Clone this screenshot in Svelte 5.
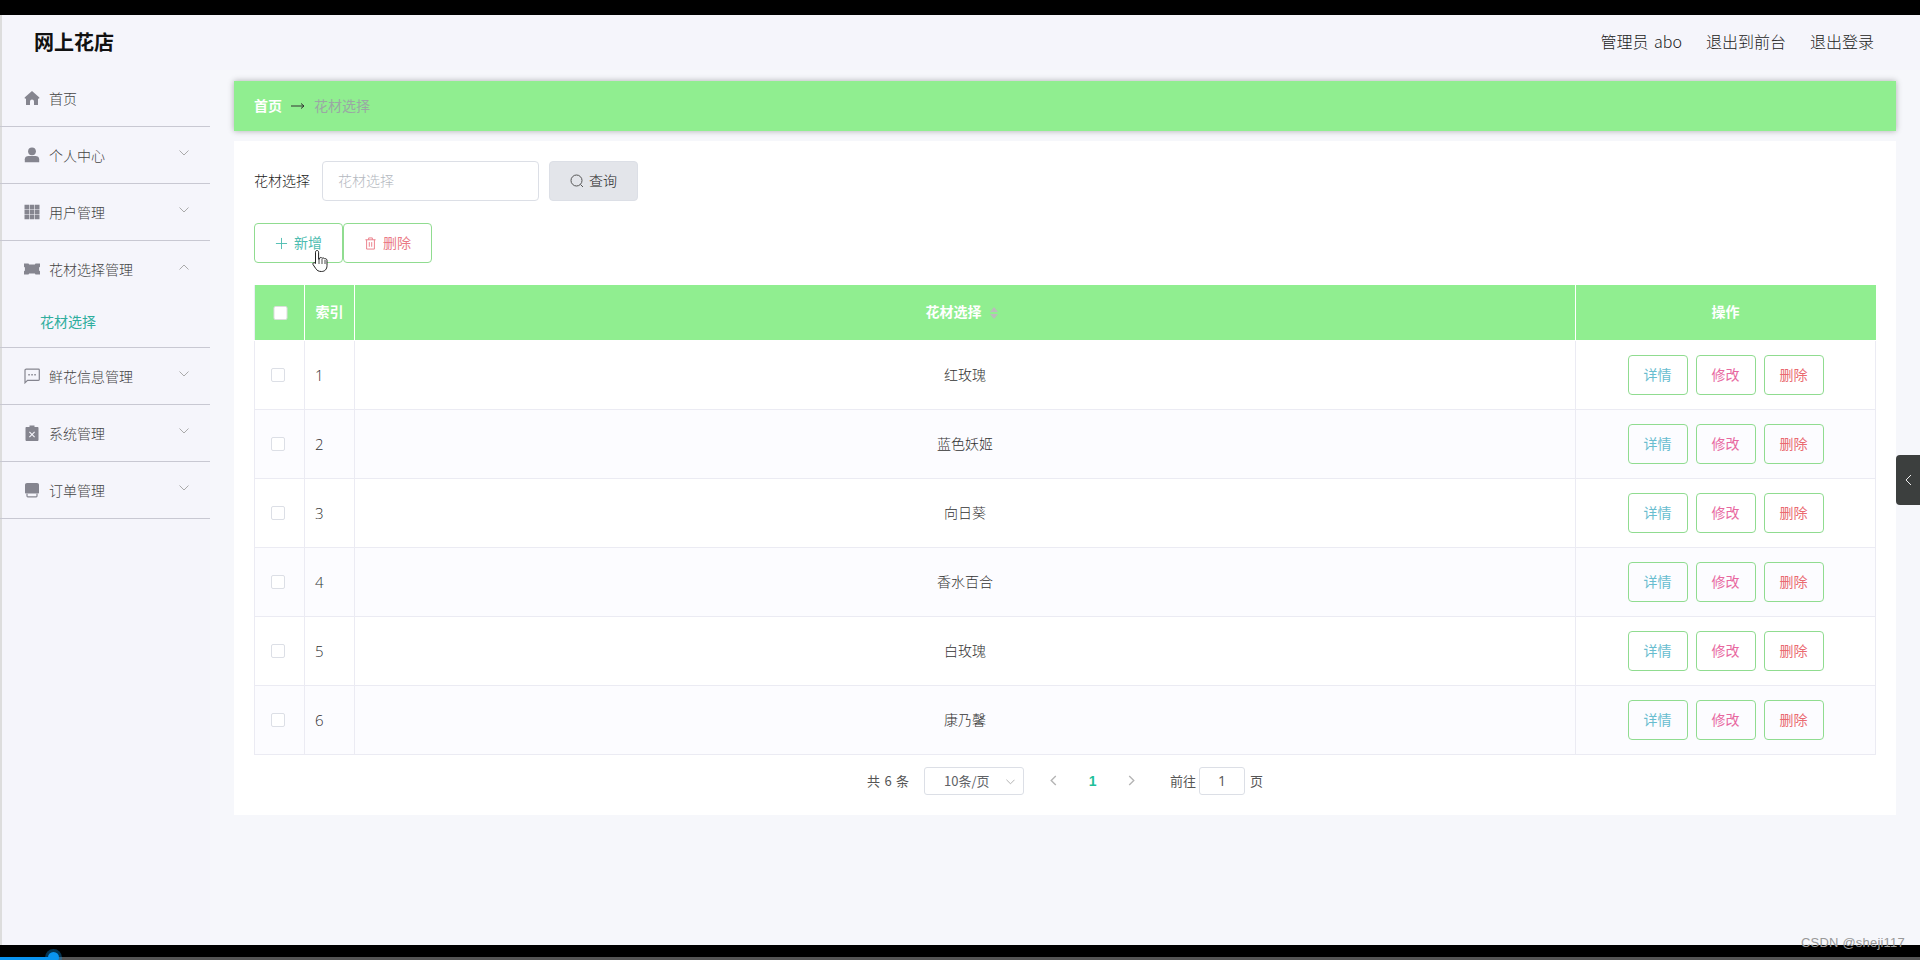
<script>
  const rows = ['红玫瑰', '蓝色妖姬', '向日葵', '香水百合', '白玫瑰', '康乃馨'];
  const menu = [
    { name: '首页', icon: 'home' },
    { name: '个人中心', icon: 'user', arrow: 'down' },
    { name: '用户管理', icon: 'grid', arrow: 'down' },
    { name: '花材选择管理', icon: 'ticket', arrow: 'up', sub: '花材选择' },
    { name: '鲜花信息管理', icon: 'chat', arrow: 'down' },
    { name: '系统管理', icon: 'clip', arrow: 'down' },
    { name: '订单管理', icon: 'print', arrow: 'down' }
  ];
</script>

<div class="page">
  <div class="bar top"></div>
  <header class="head">
    <div class="logo">网上花店</div>
    <nav class="links">
      <span class="who">管理员 abo</span><span>退出到前台</span><span>退出登录</span>
    </nav>
  </header>
  <div class="body">
    <aside class="side">
      {#each menu as m}
        <div class="group">
          <div class="item">
            <svg class="ic" viewBox="0 0 16 16">
              {#if m.icon === 'home'}
                <path d="M8 1 .6 7.600 1 9l1-.7V15h4v-3.500a2 2 0 0 1 4 0V15h4V8.300l1 .7.4-1.400z" />
              {:else if m.icon === 'user'}
                <circle cx="8" cy="4.300" r="3.900" /><path d="M.8 15.200v-3C.8 10 2.500 9 4.500 9h7c2 0 3.700 1 3.700 3.200v3z" />
              {:else if m.icon === 'grid'}
                <path d="M.5.800h4.600v4.400H.5zM5.700.800h4.600v4.400H5.700zM10.900.800h4.600v4.400h-4.600zM.5 5.800h4.600v4.400H.5zM5.700 5.800h4.600v4.400H5.700zM10.900 5.800h4.600v4.400h-4.600zM.5 10.800h4.600v4.400H.5zM5.700 10.800h4.600v4.400H5.700zM10.900 10.800h4.600v4.400h-4.600z" />
              {:else if m.icon === 'ticket'}
                <path d="M0 2.500h4.500l.6.9h5.800l.6-.9H16v3.300l-.9.7v3l.9.7v3.300h-4.500l-.6-.9H5.100l-.6.9H0v-3.300l.9-.7v-3L0 5.800z" />
              {:else if m.icon === 'chat'}
                <path class="line" d="M2.200 1.200h12.300c.5 0 .8.300.8.800v9.500c0 .5-.3.800-.8.800H3.500L1 14.800V2.200c0-.6.500-1 1.200-1z" /><path d="M4.300 6h1.500v1.500H4.300zM7.300 6h1.500v1.500H7.300zM10.300 6h1.500v1.500h-1.500z" />
              {:else if m.icon === 'clip'}
                <path d="M5.500.500h5V2h3c.5 0 1 .4 1 1v12c0 .5-.5 1-1 1h-11c-.5 0-1-.5-1-1V3c0-.6.500-1 1-1h3zM5.800 6.500 5 7.300 7.200 9.500 5 11.700l.8.800L8 10.300l2.200 2.200.8-.8L8.800 9.500 11 7.300l-.8-.8L8 8.700z" fill-rule="evenodd" />
              {:else}
                <path d="M3 1h10c1.200 0 2 .8 2 2v7.500c0 .6-.4 1-1 1H2c-.6 0-1-.4-1-1V3c0-1.200.8-2 2-2z" /><path class="line" d="M3 11.800V14c0 .5.300.800.800.800h8.400c.5 0 .8-.3.800-.8v-2.200" />
              {/if}
            </svg>
            <span class="label">{m.name}</span>
            {#if m.arrow}
              <svg class="chev" class:up={m.arrow === 'up'} viewBox="0 0 10 6"><path d="M.5.500 5 5 9.500.500" /></svg>
            {/if}
          </div>
          {#if m.sub}<div class="sub">{m.sub}</div>{/if}
        </div>
      {/each}
    </aside>
    <main class="main">
      <div class="crumb">
        <b>首页</b>
        <svg class="sep" viewBox="0 0 14 8"><path d="M0 4h13M10 1.500 13 4l-3 2.500" /></svg>
        <span>花材选择</span>
      </div>
      <section class="card">
        <div class="search">
          <span class="flabel">花材选择</span>
          <div class="input">花材选择</div>
          <div class="query">
            <svg class="mag" viewBox="0 0 14 14"><circle cx="6.500" cy="6.500" r="5.500" /><path d="m10.500 10.500 2.500 2.500" /></svg>
            查询
          </div>
        </div>
        <div class="actions">
          <div class="btn add">
            <svg class="bi" viewBox="0 0 14 14"><path d="M7 1v12M1 7h12" /></svg>新增
          </div>
          <div class="btn del">
            <svg class="bi" viewBox="0 0 14 14"><path d="M1.500 3h11M5 3V1h4v2M2.800 3v10h8.400V3M5.700 5.500v5M8.300 5.500v5" /></svg>删除
          </div>
        </div>
        <table class="tbl">
          <colgroup><col class="c1" /><col class="c2" /><col /><col class="c4" /></colgroup>
          <thead>
            <tr>
              <th><i class="chk head-chk"></i></th>
              <th>索引</th>
              <th>花材选择<svg class="sort" viewBox="0 0 8 12"><path d="M4 0 8 5H0zM4 12 0 7h8z" /></svg></th>
              <th>操作</th>
            </tr>
          </thead>
          <tbody>
            {#each rows as r, i}
              <tr class:odd={i % 2 === 1}>
                <td class="cc"><i class="chk"></i></td>
                <td class="idx">{i + 1}</td>
                <td class="name">{r}</td>
                <td>
                  <div class="ops">
                    <div class="op a">详情</div><div class="op b">修改</div><div class="op c">删除</div>
                  </div>
                </td>
              </tr>
            {/each}
          </tbody>
        </table>
        <div class="pager">
          <span class="total">共 6 条</span>
          <div class="size">10条/页<svg class="schev" viewBox="0 0 10 6"><path d="M.5.500 5 5 9.500.500" /></svg></div>
          <svg class="pg first" viewBox="0 0 7 12"><path d="M6 1 1 6l5 5" /></svg>
          <b class="num">1</b>
          <svg class="pg" viewBox="0 0 7 12"><path d="m1 1 5 5-5 5" /></svg>
          <span class="goto">前往</span>
          <div class="jump">1</div>
          <span>页</span>
        </div>
      </section>
    </main>
  </div>
  <div class="bar bottom"><div class="prog"></div><i class="knob"></i></div>

  <div class="tab"><svg viewBox="0 0 7 12"><path d="M6 1 1 6l5 5" /></svg></div>
  <svg class="cursor" viewBox="0 0 18 24">
    <path d="M5 1.500c1 0 1.600.7 1.600 1.700v7l1-.3V9c.8-.8 2-.6 2.500.3.800-.6 2-.4 2.400.5.800-.4 2.400 0 2.500 1.500v5.200c0 3.500-2 6-5.500 6-3 0-4.500-1-5.800-3L1 15.500c-.6-1.200.8-2.500 2-1.500l.5.500V3.200c0-1 .6-1.700 1.500-1.700z" />
    <path d="M7 10v5M10 10v5M13 11v4" />
  </svg>
  <div class="mark">CSDN @sheji117</div>
</div>

<style>
  :global(body) { margin: 0; }
  .page {
    position: relative;
    width: 1920px;
    height: 960px;
    overflow: hidden;
    display: flex;
    flex-direction: column;
    background: #f6f7fb;
    font-family: "Noto Sans CJK SC", "Liberation Sans", sans-serif;
    font-size: 14px;
    font-weight: 300;
    color: #444;
  }
  .bar { background: #000; flex: none; }
  .top { height: 15px; }
  .bottom { height: 15px; position: relative; }
  .prog { position: absolute; left: 0; right: 0; bottom: 0; height: 3px; background: linear-gradient(90deg, #0a94f0 53px, #555 53px); }
  .knob { position: absolute; left: 47.500px; top: 7px; width: 11px; height: 11px; border-radius: 50%; background: #0a94f0; box-shadow: 0 0 0 3px rgba(10, 148, 240, .35); }
  .head {
    height: 55px;
    flex: none;
    display: flex;
    align-items: center;
    justify-content: space-between;
    padding: 0 46px 3px 32px;
    background: #f5f5fb;
    border-left: 2px solid #ddd;
    box-sizing: border-box;
  }
  .logo { font-size: 20px; font-weight: 700; color: #111; }
  .links { display: flex; gap: 24px; font-size: 16px; color: #222; }
  .who { word-spacing: 2px; }
  .body { flex: 1; display: flex; min-height: 0; }
  .side {
    width: 210px;
    flex: none;
    background: #f5f5fb;
    border-left: 2px solid #ddd;
    box-sizing: border-box;
  }
  .group { border-bottom: 1px solid #c8c8d2; margin-left: -2px; }
  .item { height: 56px; display: flex; align-items: center; padding-left: 24px; color: #444; position: relative; }
  .ic { width: 16px; height: 16px; fill: #85858f; margin-right: 9px; flex: none; }
  .ic .line { fill: none; stroke: #85858f; stroke-width: 1.200; }
  .chev { position: absolute; left: 179px; top: 23px; width: 10px; height: 6px; }
  .chev path, .schev path { fill: none; stroke: #aaa; stroke-width: 1; }
  .chev.up { transform: rotate(180deg); }
  .sub { height: 50px; box-sizing: border-box; padding: 0 0 2px 40px; display: flex; align-items: center; color: #2fae9e; font-weight: 400; }
  .main { flex: 1; padding: 11px 24px 0; min-width: 0; }
  .crumb {
    height: 50px;
    box-sizing: border-box;
    display: flex;
    align-items: center;
    padding: 0 0 2px 20px;
    background: #90ee90;
    box-shadow: 0 0 6px rgba(0, 0, 0, .3);
    color: #9aa8a4;
    font-weight: 400;
  }
  .crumb b { color: #fff; font-weight: 700; }
  .sep { width: 14px; height: 8px; margin: 2px 9px 0 9px; }
  .sep path { fill: none; stroke: #333; stroke-width: 1; }
  .card { margin-top: 10px; background: #fff; padding: 20px 20px 0; height: 674px; box-sizing: border-box; }
  .search { display: flex; align-items: center; height: 40px; color: #222; }
  .flabel { width: 68px; padding-bottom: 2px; }
  .input {
    width: 217px;
    height: 40px;
    box-sizing: border-box;
    border: 1px solid #dcdfe6;
    border-radius: 4px;
    display: flex;
    align-items: center;
    padding: 0 0 2px 15px;
    color: #b4b8c0;
  }
  .query {
    margin-left: 10px;
    width: 89px;
    height: 40px;
    background: #e3e5ea;
    border: 1px solid #dcdfe6;
    border-radius: 4px;
    box-sizing: border-box;
    display: flex;
    align-items: center;
    justify-content: center;
    gap: 5px;
    padding-bottom: 2px;
    color: #222;
  }
  .mag { width: 14px; height: 14px; margin-top: 2px; }
  .mag circle, .mag path { fill: none; stroke: #555; stroke-width: 1; }
  .actions { display: flex; margin-top: 22px; gap: 0; }
  .btn {
    width: 89px;
    height: 40px;
    box-sizing: border-box;
    border: 1px solid #90dc90;
    border-radius: 4px;
    display: flex;
    align-items: center;
    justify-content: center;
    gap: 6px;
    padding-bottom: 2px;
    font-weight: 400;
  }
  .bi { width: 13px; height: 13px; fill: none; stroke-width: 1; stroke: currentColor; margin-top: 2px; }
  .add { color: #4dbcb0; }
  .del { color: #ea7a86; }
  .tbl {
    margin-top: 22px;
    width: 1622px;
    table-layout: fixed;
    border-collapse: collapse;
  }
  .c1, .c2 { width: 50px; }
  .c4 { width: 300px; }
  th {
    height: 55px;
    padding: 0 0 2px;
    background: #90ee90;
    color: #fff;
    font-weight: 700;
    border-right: 1px solid #fff;
    border-left: 1px solid #fff;
    border-bottom: 1px solid #fff;
    box-sizing: border-box;
  }
  th:first-child { border-left-color: #ebeef5; }
  th:last-child { border-right-color: #90ee90; }
  td {
    height: 69px;
    padding: 0;
    text-align: center;
    border: 1px solid #ebebf3;
    box-sizing: border-box;
    color: #333;
  }
  .odd td { background: #fcfcff; }
  .name { padding-bottom: 2px; }
  .idx { text-align: left; padding-left: 10px; font-family: "Open Sans", sans-serif; font-size: 15px; color: #333; }
  .cc { text-align: left; padding-left: 16px; }
  .chk {
    display: block;
    width: 14px;
    height: 14px;
    box-sizing: border-box;
    border: 1px solid #dcdfe6;
    border-radius: 2px;
    background: #fff;
  }
  .head-chk { margin: 0 auto; transform: translate(0.500px, 2px); border-color: #ddd; }
  .sort { width: 8px; height: 12px; fill: #bbb; margin: 0 7px 0 8px; vertical-align: -2px; }
  .ops { display: flex; justify-content: center; gap: 8px; }
  .op {
    width: 60px;
    height: 40px;
    box-sizing: border-box;
    border: 1px solid #90dc90;
    border-radius: 4px;
    display: flex;
    align-items: center;
    justify-content: center;
    padding-bottom: 2px;
    font-weight: 400;
  }
  .a { color: #68bdcf; }
  .b { color: #e8689f; }
  .c { color: #ea6a70; }
  .pager { display: flex; align-items: center; height: 28px; margin-top: 12px; padding-left: 613px; font-size: 13px; color: #555; font-weight: 400; }
  .total { word-spacing: 1.500px; padding-bottom: 1px; }
  .size {
    margin-left: 15px;
    width: 100px;
    height: 28px;
    box-sizing: border-box;
    border: 1px solid #dcdfe6;
    border-radius: 3px;
    padding: 0 0 1px 19px;
    display: flex;
    align-items: center;
    position: relative;
    color: #606266;
  }
  .schev { position: absolute; right: 8px; top: 11px; width: 9px; height: 6px; }
  .pg { width: 7px; height: 11px; flex: none; }
  .pg path { fill: none; stroke: #b4b4b4; stroke-width: 1.500; }
  .first { margin-left: 26px; }
  .num { width: 71px; text-align: center; color: #1fc09a; font-family: "Liberation Sans", sans-serif; font-size: 14px; font-weight: 700; flex: none; }
  .goto { margin-left: 35px; padding-bottom: 1px; }
  .jump {
    margin: 0 5px 0 3px;
    width: 46px;
    height: 28px;
    box-sizing: border-box;
    border: 1px solid #dcdfe6;
    border-radius: 3px;
    display: flex;
    align-items: center;
    justify-content: center;
    font-family: "Open Sans", sans-serif;
    font-size: 14px;
  }
  .tab {
    position: absolute;
    left: 1896px;
    top: 455px;
    width: 24px;
    height: 50px;
    background: #3c3f3e;
    border-radius: 4px 0 0 4px;
    display: flex;
    align-items: center;
    justify-content: center;
  }
  .tab svg { width: 7px; height: 12px; }
  .tab path { fill: none; stroke: #f0f0f0; stroke-width: 1; }
  .cursor { position: absolute; left: 312px; top: 249px; width: 18px; height: 24px; }
  .cursor path:first-child { fill: #fff; stroke: #222; stroke-width: 1; }
  .cursor path:last-of-type { fill: none; stroke: #222; stroke-width: .8; }
  .mark { position: absolute; left: 1801px; top: 935px; font-family: "Liberation Sans", sans-serif; font-size: 13px; color: #999; letter-spacing: .2px; }
</style>
